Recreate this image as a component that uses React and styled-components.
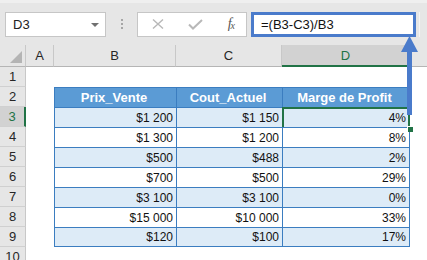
import React from "react";
import styled, { createGlobalStyle } from "styled-components";

const GlobalStyle = createGlobalStyle`
  html, body {
    margin: 0;
    padding: 0;
    background: #ffffff;
    overflow: hidden;
  }
  body {
    font-family: "Liberation Sans", Arial, sans-serif;
  }
`;

const rows = [
  { price: "$1 200", cost: "$1 150", margin: "4%" },
  { price: "$1 300", cost: "$1 200", margin: "8%" },
  { price: "$500", cost: "$488", margin: "2%" },
  { price: "$700", cost: "$500", margin: "29%" },
  { price: "$3 100", cost: "$3 100", margin: "0%" },
  { price: "$15 000", cost: "$10 000", margin: "33%" },
  { price: "$120", cost: "$100", margin: "17%" },
];

const BLUE = "#3b7dc0";
const GREEN = "#217346";

const App = () => {
  return (
    <Page>
      <GlobalStyle />
      <FormulaBar>
        <NameBox>
          <span>D3</span>
          <Caret />
        </NameBox>
        <Grip>
          <i />
          <i />
          <i />
        </Grip>
        <ButtonGroup>
          <svg width="12" height="10" viewBox="0 0 12 10">
            <path d="M1 0.5 L11 9.5 M11 0.5 L1 9.5" stroke="#b8b8b8" strokeWidth="1.4" fill="none" />
          </svg>
          <svg width="15" height="11" viewBox="0 0 15 11">
            <path d="M1 5.5 L5 9.5 L14 1" stroke="#b8b8b8" strokeWidth="2" fill="none" />
          </svg>
          <Fx>
            f<sub>x</sub>
          </Fx>
        </ButtonGroup>
        <FormulaInput>=(B3-C3)/B3</FormulaInput>
        <Rest />
      </FormulaBar>

      <Sheet>
        <Corner>
          <Triangle />
        </Corner>
        <ColHeader>A</ColHeader>
        <ColHeader>B</ColHeader>
        <ColHeader>C</ColHeader>
        <ColHeader $active>D</ColHeader>
        <ColHeader $last />

        <RowHeader>1</RowHeader>
        <Blank />
        <Blank />
        <Blank />
        <Blank />
        <Blank />

        <RowHeader>2</RowHeader>
        <Blank />
        <TableCell $head>Prix_Vente</TableCell>
        <TableCell $head>Cout_Actuel</TableCell>
        <TableCell $head $end>Marge de Profit</TableCell>
        <Blank />

        {rows.map((r, i) => {
          const band = i % 2 === 0;
          const bottom = i === rows.length - 1;
          return (
            <React.Fragment key={i}>
              <RowHeader $active={i === 0}>{i + 3}</RowHeader>
              <Blank />
              <TableCell $band={band} $bottom={bottom}>{r.price}</TableCell>
              <TableCell $band={band} $bottom={bottom}>{r.cost}</TableCell>
              <TableCell $band={band} $bottom={bottom} $end $selected={i === 0}>
                {r.margin}
              </TableCell>
              <Blank />
            </React.Fragment>
          );
        })}

        <RowHeader>10</RowHeader>
        <Blank />
        <Blank />
        <Blank />
        <Blank />
        <Blank />
      </Sheet>

      <Arrow width="20" height="82" viewBox="0 0 20 82">
        <path d="M9.5 0 L18 16 L12 16 L12 79 L7 79 L7 16 L1 16 Z" fill="#4a7bcb" />
      </Arrow>
    </Page>
  );
};

const Page = styled.div`
  position: relative;
  width: 427px;
  height: 260px;
  overflow: hidden;
  background: #ffffff;
`;

const FormulaBar = styled.div`
  display: flex;
  align-items: center;
  height: 45px;
  padding-left: 5px;
  box-sizing: border-box;
  background: #e6e6e6;
  border-top: 3px solid #efefef;
`;

const NameBox = styled.div`
  display: flex;
  align-items: center;
  justify-content: space-between;
  width: 101px;
  height: 25px;
  box-sizing: border-box;
  padding: 0 6px 0 7px;
  background: #ffffff;
  border: 1px solid #c6c6c6;
  font-size: 13px;
  color: #222;
`;

const Caret = styled.span`
  width: 0;
  height: 0;
  border-left: 4px solid transparent;
  border-right: 4px solid transparent;
  border-top: 4px solid #707070;
  margin-top: 1px;
`;

const Grip = styled.div`
  display: flex;
  flex-direction: column;
  align-items: center;
  gap: 2px;
  width: 31px;
  & i {
    display: block;
    width: 2px;
    height: 2px;
    background: #a6a6a6;
  }
`;

const ButtonGroup = styled.div`
  display: flex;
  align-items: center;
  width: 110px;
  height: 25px;
  box-sizing: border-box;
  padding: 0 12px 0 14px;
  justify-content: space-between;
  background: #ffffff;
  border: 1px solid #c6c6c6;
`;

const Fx = styled.span`
  font-family: "Liberation Serif", "Times New Roman", serif;
  font-style: italic;
  font-size: 14px;
  color: #555;
  letter-spacing: -1px;
  & sub {
    font-size: 10px;
    vertical-align: -1px;
  }
`;

const FormulaInput = styled.div`
  display: flex;
  align-items: center;
  margin-left: 4px;
  width: 165px;
  height: 25px;
  box-sizing: border-box;
  padding-left: 7px;
  background: #ffffff;
  border: 3px solid #4a7bcb;
  font-size: 13px;
  color: #111;
`;

const Rest = styled.div`
  flex: 1;
  height: 25px;
  margin-left: 3px;
  border-left: 1px solid #f4f4f4;
`;

const Sheet = styled.div`
  display: grid;
  grid-template-columns: 26px 28px 122px 106px 128px 1fr;
  grid-template-rows: 22px;
  grid-auto-rows: 20px;
  font-size: 13px;
`;

const Corner = styled.div`
  position: relative;
  background: #e6e6e6;
  border-right: 1px solid #c8c8c8;
  border-bottom: 1px solid #b5b5b5;
`;

const Triangle = styled.span`
  position: absolute;
  right: 3px;
  bottom: 3px;
  width: 0;
  height: 0;
  border-left: 12px solid transparent;
  border-bottom: 12px solid #b4b4b4;
`;

const ColHeader = styled.div`
  display: flex;
  align-items: center;
  justify-content: center;
  box-sizing: border-box;
  background: ${(p) => (p.$active ? "#d2d2d2" : "#e6e6e6")};
  color: ${(p) => (p.$active ? GREEN : "#262626")};
  border-right: ${(p) => (p.$last ? "none" : "1px solid #c8c8c8")};
  border-bottom: ${(p) => (p.$active ? `2px solid ${GREEN}` : "1px solid #b5b5b5")};
`;

const RowHeader = styled.div`
  display: flex;
  align-items: center;
  justify-content: center;
  box-sizing: border-box;
  background: ${(p) => (p.$active ? "#d2d2d2" : "#e6e6e6")};
  color: ${(p) => (p.$active ? GREEN : "#262626")};
  border-right: ${(p) => (p.$active ? `2px solid ${GREEN}` : "1px solid #c8c8c8")};
  border-bottom: 1px solid #d0d0d0;
`;

const Blank = styled.div`
  background: #ffffff;
`;

const TableCell = styled.div`
  position: relative;
  display: flex;
  align-items: center;
  justify-content: ${(p) => (p.$head ? "center" : "flex-end")};
  box-sizing: border-box;
  padding-right: 3px;
  font-size: ${(p) => (p.$head ? "13px" : "12px")};
  font-weight: ${(p) => (p.$head ? 700 : 400)};
  color: ${(p) => (p.$head ? "#ffffff" : "#111")};
  background: ${(p) => (p.$head ? "#5b9bd5" : p.$band ? "#ddebf7" : "#ffffff")};
  border-top: 1px solid ${BLUE};
  border-left: 1px solid ${BLUE};
  border-right: ${(p) => (p.$end ? `1px solid ${BLUE}` : "none")};
  border-bottom: ${(p) => (p.$bottom ? `1px solid ${BLUE}` : "none")};
  white-space: nowrap;

  ${(p) =>
    p.$selected &&
    `
    &::after {
      content: "";
      position: absolute;
      top: -1px;
      left: -1px;
      right: -1px;
      bottom: -2px;
      border: 2px solid ${GREEN};
      pointer-events: none;
    }
    &::before {
      content: "";
      position: absolute;
      right: -4px;
      bottom: -5px;
      width: 5px;
      height: 5px;
      background: ${GREEN};
      border-top: 1px solid #fff;
      border-left: 1px solid #fff;
      z-index: 1;
    }
  `}
`;

const Arrow = styled.svg`
  position: absolute;
  left: 400px;
  top: 36px;
  z-index: 2;
`;

export default App;
